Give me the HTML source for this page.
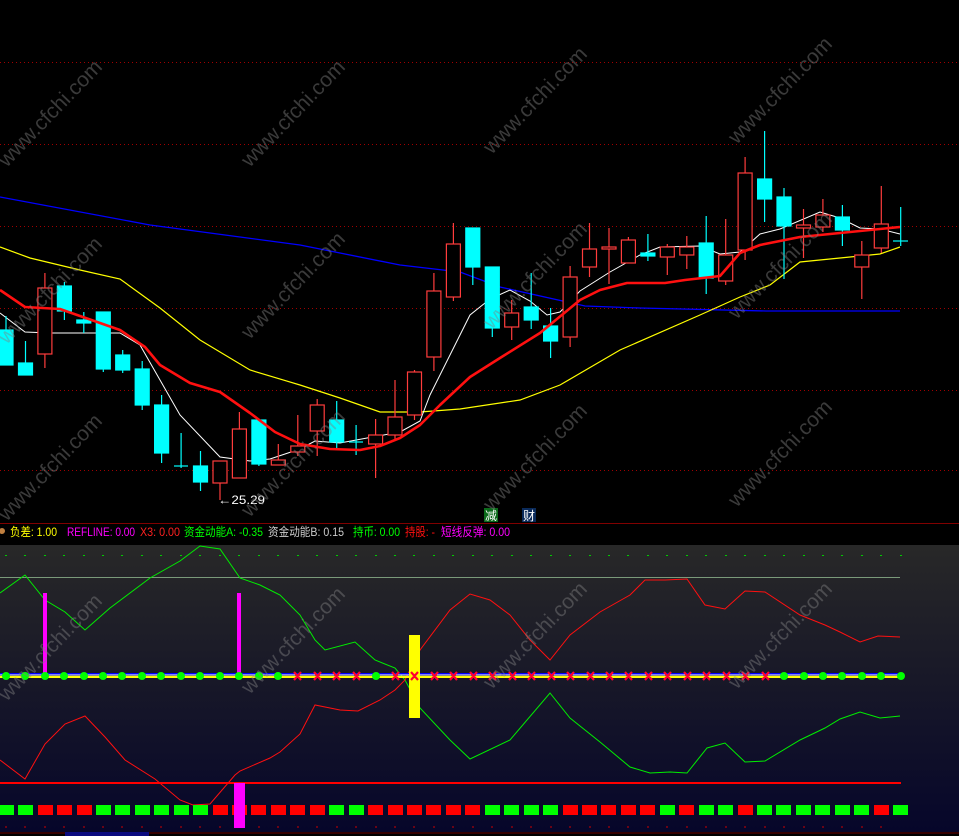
<!DOCTYPE html>
<html><head><meta charset="utf-8"><style>
html,body{margin:0;padding:0;background:#000;width:959px;height:836px;overflow:hidden}
svg{display:block}
.wm{font-family:"Liberation Sans",sans-serif;font-size:21px;fill:#808080;fill-opacity:0.45}
.lb{font-family:"Liberation Sans","Noto Sans CJK SC",sans-serif;font-size:12px}
</style></head><body>
<svg width="959" height="836" viewBox="0 0 959 836" xmlns="http://www.w3.org/2000/svg">
<defs>
<linearGradient id="g" x1="0" y1="0" x2="0" y2="1">
<stop offset="0" stop-color="#282828"/><stop offset="0.35" stop-color="#1c1c28"/><stop offset="1" stop-color="#06062a"/>
</linearGradient>
</defs>
<rect x="0" y="0" width="959" height="545" fill="#000"/>
<rect x="0" y="545" width="959" height="288" fill="url(#g)"/>
<rect x="0" y="832" width="959" height="4" fill="#000"/>
<line x1="0" y1="833" x2="959" y2="833" stroke="#6a0000" stroke-width="1"/>
<rect x="65" y="832" width="84" height="4" fill="#0a0a80"/>
<g stroke="#a00000" stroke-width="1" stroke-dasharray="1,3">
<line x1="0" y1="62.5" x2="959" y2="62.5"/><line x1="0" y1="144.5" x2="959" y2="144.5"/>
<line x1="0" y1="226.5" x2="959" y2="226.5"/><line x1="0" y1="308.5" x2="959" y2="308.5"/>
<line x1="0" y1="390.5" x2="959" y2="390.5"/><line x1="0" y1="470.5" x2="959" y2="470.5"/>
</g>
<line x1="0" y1="523.5" x2="959" y2="523.5" stroke="#800000"/>
<polyline fill="none" stroke="#0000ff" stroke-width="1.3" points="0,197 150,225 300,245 400,265 460,272 500,287 585,306 640,308 766,311 833,311 900,311"/>
<polyline fill="none" stroke="#ffff00" stroke-width="1.2" points="0,247 30,258 80,270 120,279 160,308 200,340 250,370 300,385 340,398 380,412 420,412 460,409 520,400 560,385 620,350 700,315 740,297 770,285 800,262 850,257 880,254 900,247"/>
<polyline fill="none" stroke="#ffffff" stroke-width="1" points="0,313 25,332 50,333 120,333 140,345 160,380 180,415 220,457 250,461 270,459 300,449 315,441 340,443 400,432 420,421 430,395 470,315 490,299 510,290 530,301 547,315 560,312 580,291 610,272 640,255 660,247 700,246 720,254 740,252 760,234 780,229 820,212 840,218 860,228 880,229 900,234"/>
<g stroke-width="1.2">
<g stroke="#00ffff" fill="#00ffff">
<line x1="6" y1="316" x2="6" y2="365"/><rect x="-1" y="330" width="14" height="35"/>
<line x1="25.5" y1="341" x2="25.5" y2="375"/><rect x="18.5" y="363" width="14" height="12"/>
<line x1="64.4" y1="282" x2="64.4" y2="320"/><rect x="57.4" y="286" width="14" height="25"/>
<line x1="83.8" y1="312" x2="83.8" y2="333"/><rect x="76.8" y="320" width="14" height="3"/>
<line x1="103.3" y1="312" x2="103.3" y2="372"/><rect x="96.3" y="312" width="14" height="57"/>
<line x1="122.7" y1="350" x2="122.7" y2="373"/><rect x="115.7" y="355" width="14" height="15"/>
<line x1="142.2" y1="361" x2="142.2" y2="410"/><rect x="135.2" y="369" width="14" height="36"/>
<line x1="161.6" y1="395" x2="161.6" y2="463"/><rect x="154.6" y="405" width="14" height="48"/>
<line x1="181.1" y1="433" x2="181.1" y2="468"/><line x1="174" y1="466" x2="188" y2="466"/>
<line x1="200.5" y1="451" x2="200.5" y2="491"/><rect x="193.5" y="466" width="14" height="16"/>
<line x1="258.9" y1="419" x2="258.9" y2="466"/><rect x="251.9" y="420" width="14" height="44"/>
<line x1="336.7" y1="401" x2="336.7" y2="450"/><rect x="329.7" y="420" width="14" height="22"/>
<line x1="356.1" y1="425" x2="356.1" y2="455"/><line x1="349" y1="442" x2="363" y2="442"/>
<line x1="472.8" y1="228" x2="472.8" y2="285"/><rect x="465.8" y="228" width="14" height="39"/>
<line x1="492.3" y1="267" x2="492.3" y2="337"/><rect x="485.3" y="267" width="14" height="61"/>
<line x1="531.2" y1="273" x2="531.2" y2="329"/><rect x="524.2" y="307" width="14" height="13"/>
<line x1="550.6" y1="308" x2="550.6" y2="358"/><rect x="543.6" y="326" width="14" height="15"/>
<line x1="647.9" y1="234" x2="647.9" y2="261"/><rect x="640.9" y="253" width="14" height="3"/>
<line x1="706.2" y1="216" x2="706.2" y2="294"/><rect x="699.2" y="243" width="14" height="35"/>
<line x1="764.6" y1="131" x2="764.6" y2="222"/><rect x="757.6" y="179" width="14" height="20"/>
<line x1="784" y1="188" x2="784" y2="279"/><rect x="777" y="197" width="14" height="29"/>
<line x1="842.4" y1="205" x2="842.4" y2="246"/><rect x="835.4" y="217" width="14" height="13"/>
<line x1="900.7" y1="207" x2="900.7" y2="246"/><line x1="893" y1="241" x2="908" y2="241"/>
</g>
<g stroke="#ff3c3c" fill="#000">
<line x1="44.9" y1="273" x2="44.9" y2="368"/><rect x="37.9" y="288" width="14" height="66"/>
<line x1="220" y1="461" x2="220" y2="500"/><rect x="213" y="461" width="14" height="22"/>
<line x1="239.4" y1="412" x2="239.4" y2="478"/><rect x="232.4" y="429" width="14" height="49"/>
<line x1="278.3" y1="444" x2="278.3" y2="465"/><rect x="271.3" y="460" width="14" height="5"/>
<line x1="297.8" y1="415" x2="297.8" y2="456"/><rect x="290.8" y="446" width="14" height="6"/>
<line x1="317.2" y1="399" x2="317.2" y2="456"/><rect x="310.2" y="405" width="14" height="26"/>
<line x1="375.6" y1="419" x2="375.6" y2="478"/><rect x="368.6" y="435" width="14" height="9"/>
<line x1="395" y1="380" x2="395" y2="440"/><rect x="388" y="417" width="14" height="18"/>
<line x1="414.5" y1="370" x2="414.5" y2="420"/><rect x="407.5" y="372" width="14" height="43"/>
<line x1="433.9" y1="273" x2="433.9" y2="371"/><rect x="426.9" y="291" width="14" height="66"/>
<line x1="453.4" y1="223" x2="453.4" y2="301"/><rect x="446.4" y="244" width="14" height="53"/>
<line x1="511.7" y1="300" x2="511.7" y2="340"/><rect x="504.7" y="313" width="14" height="14"/>
<line x1="570.1" y1="266" x2="570.1" y2="347"/><rect x="563.1" y="277" width="14" height="60"/>
<line x1="589.5" y1="223" x2="589.5" y2="277"/><rect x="582.5" y="249" width="14" height="18"/>
<line x1="609" y1="228" x2="609" y2="284"/><rect x="602" y="247" width="14" height="2"/>
<line x1="628.4" y1="237" x2="628.4" y2="263"/><rect x="621.4" y="240" width="14" height="23"/>
<line x1="667.3" y1="244" x2="667.3" y2="275"/><rect x="660.3" y="247" width="14" height="10"/>
<line x1="686.8" y1="236" x2="686.8" y2="269"/><rect x="679.8" y="247" width="14" height="8"/>
<line x1="725.7" y1="219" x2="725.7" y2="285"/><rect x="718.7" y="255" width="14" height="26"/>
<line x1="745.1" y1="157" x2="745.1" y2="260"/><rect x="738.1" y="173" width="14" height="77"/>
<line x1="803.5" y1="209" x2="803.5" y2="258"/><rect x="796.5" y="225" width="14" height="3"/>
<line x1="822.9" y1="199" x2="822.9" y2="232"/><rect x="815.9" y="215" width="14" height="12"/>
<line x1="861.8" y1="241" x2="861.8" y2="299"/><rect x="854.8" y="255" width="14" height="12"/>
<line x1="881.3" y1="186" x2="881.3" y2="253"/><rect x="874.3" y="224" width="14" height="24"/>
</g>
</g>
<polyline fill="none" stroke="#ff1010" stroke-width="2.6" stroke-linejoin="round" points="0,290 25,307 60,309 120,330 145,347 160,365 190,383 220,392 250,413 275,432 300,444 330,449 360,450 380,446 400,438 420,425 440,405 470,377 500,358 540,333 580,300 600,290 627,283 665,283 685,280 720,276 740,253 760,245 800,237 850,232 900,227"/>
<text x="218" y="504" class="lb" fill="#fff" textLength="47" lengthAdjust="spacingAndGlyphs">←25.29</text>
<rect x="484" y="508" width="14" height="14" fill="#0a6a1a"/><text x="485" y="520" class="lb" fill="#fff">减</text>
<rect x="522" y="508" width="14" height="14" fill="#0a2a5a"/><text x="523" y="520" class="lb" fill="#fff">财</text>
<g class="lb">
<text x="10" y="536" fill="#ffff00" textLength="47" lengthAdjust="spacingAndGlyphs">负差: 1.00</text>
<text x="67" y="536" fill="#ff00ff" textLength="68" lengthAdjust="spacingAndGlyphs">REFLINE: 0.00</text>
<text x="140" y="536" fill="#ff2020" textLength="40" lengthAdjust="spacingAndGlyphs">X3: 0.00</text>
<text x="184" y="536" fill="#00ff00" textLength="79" lengthAdjust="spacingAndGlyphs">资金动能A: -0.35</text>
<text x="268" y="536" fill="#cccccc" textLength="76" lengthAdjust="spacingAndGlyphs">资金动能B: 0.15</text>
<text x="353" y="536" fill="#00ff00" textLength="47" lengthAdjust="spacingAndGlyphs">持币: 0.00</text>
<text x="405" y="536" fill="#ff1010" textLength="30" lengthAdjust="spacingAndGlyphs">持股: -</text>
<text x="441" y="536" fill="#ff00ff" textLength="69" lengthAdjust="spacingAndGlyphs">短线反弹: 0.00</text>
</g>
<circle cx="2" cy="531" r="3" fill="#c08040"/>
<g stroke="#00cc00" stroke-width="2">
<path d="M6 555v1M25 555v1M45 555v1M64 555v1M84 555v1M103 555v1M122 555v1M142 555v1M161 555v1M181 555v1M200 555v1M220 555v1M239 555v1M259 555v1M278 555v1M298 555v1M317 555v1M337 555v1M356 555v1M376 555v1M395 555v1M414 555v1M434 555v1M453 555v1M473 555v1M492 555v1M512 555v1M531 555v1M551 555v1M570 555v1M590 555v1M609 555v1M628 555v1M648 555v1M667 555v1M687 555v1M706 555v1M726 555v1M745 555v1M765 555v1M784 555v1M804 555v1M823 555v1M842 555v1M862 555v1M881 555v1M901 555v1"/>
</g>
<line x1="0" y1="577.5" x2="900" y2="577.5" stroke="#7a9a7a" stroke-width="1"/>
<polyline fill="none" stroke="#00ee00" stroke-width="1" points="0,593 25,575 45,600 65,612 85,630 110,608 150,578 180,561 200,546 220,549 240,578 260,585 280,595 300,615 315,640 325,650 355,642 375,660 395,668 405,680 420,708 450,740 470,759 510,740 550,693 570,718 600,742 630,767 650,773 670,772 687,773 707,748 725,743 745,762 765,761 800,740 825,728 840,719 860,712 880,718 900,716"/>
<polyline fill="none" stroke="#ff1010" stroke-width="1" points="0,760 25,779 45,744 65,724 85,716 105,737 125,760 155,779 180,800 193,805 210,804 235,775 240,771 270,758 280,752 300,734 315,705 340,710 358,711 380,700 395,690 405,680 420,650 450,610 470,594 490,600 510,615 530,640 550,660 570,635 600,612 630,595 645,580 665,580 687,579 705,605 725,609 745,591 765,592 800,615 825,625 840,632 860,642 878,636 900,637"/>
<line x1="0" y1="674" x2="900" y2="674" stroke="#0000ff" stroke-width="2"/>
<line x1="0" y1="675" x2="900" y2="675" stroke="#ffffff" stroke-width="1"/>
<line x1="0" y1="677" x2="900" y2="677" stroke="#ffff00" stroke-width="2"/>
<rect x="43" y="593" width="4" height="83" fill="#ff00ff"/>
<rect x="237" y="593" width="4" height="83" fill="#ff00ff"/>
<rect x="409" y="635" width="11" height="83" fill="#ffff00"/>
<g fill="#00ff00">
<circle cx="6" cy="676" r="4"/><circle cx="25" cy="676" r="4"/><circle cx="45" cy="676" r="4"/><circle cx="64" cy="676" r="4"/><circle cx="84" cy="676" r="4"/><circle cx="103" cy="676" r="4"/><circle cx="122" cy="676" r="4"/><circle cx="142" cy="676" r="4"/><circle cx="161" cy="676" r="4"/><circle cx="181" cy="676" r="4"/><circle cx="200" cy="676" r="4"/><circle cx="220" cy="676" r="4"/><circle cx="239" cy="676" r="4"/><circle cx="259" cy="676" r="4"/><circle cx="278" cy="676" r="4"/><circle cx="376" cy="676" r="4"/>
<circle cx="784" cy="676" r="4"/><circle cx="804" cy="676" r="4"/><circle cx="823" cy="676" r="4"/><circle cx="842" cy="676" r="4"/><circle cx="862" cy="676" r="4"/><circle cx="881" cy="676" r="4"/><circle cx="901" cy="676" r="4"/>
</g>
<g stroke="#ff0030" stroke-width="2.2">
<path d="M294 672l7 8M301 672l-7 8M314 672l7 8M321 672l-7 8M333 672l7 8M340 672l-7 8M353 672l7 8M360 672l-7 8M392 672l7 8M399 672l-7 8M411 672l7 8M418 672l-7 8M431 672l7 8M438 672l-7 8M450 672l7 8M457 672l-7 8M470 672l7 8M477 672l-7 8M489 672l7 8M496 672l-7 8M509 672l7 8M516 672l-7 8M528 672l7 8M535 672l-7 8M548 672l7 8M555 672l-7 8M567 672l7 8M574 672l-7 8M587 672l7 8M594 672l-7 8M606 672l7 8M613 672l-7 8M625 672l7 8M632 672l-7 8M645 672l7 8M652 672l-7 8M664 672l7 8M671 672l-7 8M684 672l7 8M691 672l-7 8M703 672l7 8M710 672l-7 8M723 672l7 8M730 672l-7 8M742 672l7 8M749 672l-7 8M762 672l7 8M769 672l-7 8"/>
</g>
<line x1="0" y1="783" x2="901" y2="783" stroke="#ff0000" stroke-width="2"/>
<g>
<rect x="-1" y="805" width="15" height="10" fill="#00ff00"/><rect x="18" y="805" width="15" height="10" fill="#00ff00"/><rect x="38" y="805" width="15" height="10" fill="#ff0000"/><rect x="57" y="805" width="15" height="10" fill="#ff0000"/><rect x="77" y="805" width="15" height="10" fill="#ff0000"/><rect x="96" y="805" width="15" height="10" fill="#00ff00"/><rect x="115" y="805" width="15" height="10" fill="#00ff00"/><rect x="135" y="805" width="15" height="10" fill="#00ff00"/><rect x="154" y="805" width="15" height="10" fill="#00ff00"/><rect x="174" y="805" width="15" height="10" fill="#00ff00"/><rect x="193" y="805" width="15" height="10" fill="#00ff00"/><rect x="213" y="805" width="15" height="10" fill="#ff0000"/><rect x="232" y="805" width="15" height="10" fill="#ff0000"/><rect x="251" y="805" width="15" height="10" fill="#ff0000"/><rect x="271" y="805" width="15" height="10" fill="#ff0000"/><rect x="290" y="805" width="15" height="10" fill="#ff0000"/><rect x="310" y="805" width="15" height="10" fill="#ff0000"/><rect x="329" y="805" width="15" height="10" fill="#00ff00"/><rect x="349" y="805" width="15" height="10" fill="#00ff00"/><rect x="368" y="805" width="15" height="10" fill="#ff0000"/><rect x="388" y="805" width="15" height="10" fill="#ff0000"/><rect x="407" y="805" width="15" height="10" fill="#ff0000"/><rect x="426" y="805" width="15" height="10" fill="#ff0000"/><rect x="446" y="805" width="15" height="10" fill="#ff0000"/><rect x="465" y="805" width="15" height="10" fill="#ff0000"/><rect x="485" y="805" width="15" height="10" fill="#00ff00"/><rect x="504" y="805" width="15" height="10" fill="#00ff00"/><rect x="524" y="805" width="15" height="10" fill="#00ff00"/><rect x="543" y="805" width="15" height="10" fill="#00ff00"/><rect x="563" y="805" width="15" height="10" fill="#ff0000"/><rect x="582" y="805" width="15" height="10" fill="#ff0000"/><rect x="601" y="805" width="15" height="10" fill="#ff0000"/><rect x="621" y="805" width="15" height="10" fill="#ff0000"/><rect x="640" y="805" width="15" height="10" fill="#ff0000"/><rect x="660" y="805" width="15" height="10" fill="#00ff00"/><rect x="679" y="805" width="15" height="10" fill="#ff0000"/><rect x="699" y="805" width="15" height="10" fill="#00ff00"/><rect x="718" y="805" width="15" height="10" fill="#00ff00"/><rect x="738" y="805" width="15" height="10" fill="#ff0000"/><rect x="757" y="805" width="15" height="10" fill="#00ff00"/><rect x="776" y="805" width="15" height="10" fill="#00ff00"/><rect x="796" y="805" width="15" height="10" fill="#00ff00"/><rect x="815" y="805" width="15" height="10" fill="#00ff00"/><rect x="835" y="805" width="15" height="10" fill="#00ff00"/><rect x="854" y="805" width="15" height="10" fill="#00ff00"/><rect x="874" y="805" width="15" height="10" fill="#ff0000"/><rect x="893" y="805" width="15" height="10" fill="#00ff00"/>
</g>
<rect x="234" y="783" width="11" height="45" fill="#ff00ff"/>
<g stroke="#cc0000" stroke-width="1">
<path d="M6 826v2M25 826v2M45 826v2M64 826v2M84 826v2M103 826v2M122 826v2M142 826v2M161 826v2M181 826v2M200 826v2M220 826v2M259 826v2M278 826v2M298 826v2M317 826v2M337 826v2M356 826v2M376 826v2M395 826v2M414 826v2M434 826v2M453 826v2M473 826v2M492 826v2M512 826v2M531 826v2M551 826v2M570 826v2M590 826v2M609 826v2M628 826v2M648 826v2M667 826v2M687 826v2M706 826v2M726 826v2M745 826v2M765 826v2M784 826v2M804 826v2M823 826v2M842 826v2M862 826v2M881 826v2"/>
</g>
<g class="wm">
<text transform="translate(55,118) rotate(-46)" text-anchor="middle">www.cfchi.com</text>
<text transform="translate(298,118) rotate(-46)" text-anchor="middle">www.cfchi.com</text>
<text transform="translate(540,105) rotate(-46)" text-anchor="middle">www.cfchi.com</text>
<text transform="translate(785,95) rotate(-46)" text-anchor="middle">www.cfchi.com</text>
<text transform="translate(55,295) rotate(-46)" text-anchor="middle">www.cfchi.com</text>
<text transform="translate(298,290) rotate(-46)" text-anchor="middle">www.cfchi.com</text>
<text transform="translate(540,280) rotate(-46)" text-anchor="middle">www.cfchi.com</text>
<text transform="translate(785,270) rotate(-46)" text-anchor="middle">www.cfchi.com</text>
<text transform="translate(55,472) rotate(-46)" text-anchor="middle">www.cfchi.com</text>
<text transform="translate(298,468) rotate(-46)" text-anchor="middle">www.cfchi.com</text>
<text transform="translate(540,462) rotate(-46)" text-anchor="middle">www.cfchi.com</text>
<text transform="translate(785,458) rotate(-46)" text-anchor="middle">www.cfchi.com</text>
<text transform="translate(55,652) rotate(-46)" text-anchor="middle">www.cfchi.com</text>
<text transform="translate(298,645) rotate(-46)" text-anchor="middle">www.cfchi.com</text>
<text transform="translate(540,640) rotate(-46)" text-anchor="middle">www.cfchi.com</text>
<text transform="translate(785,640) rotate(-46)" text-anchor="middle">www.cfchi.com</text>
</g>
</svg>
</body></html>
